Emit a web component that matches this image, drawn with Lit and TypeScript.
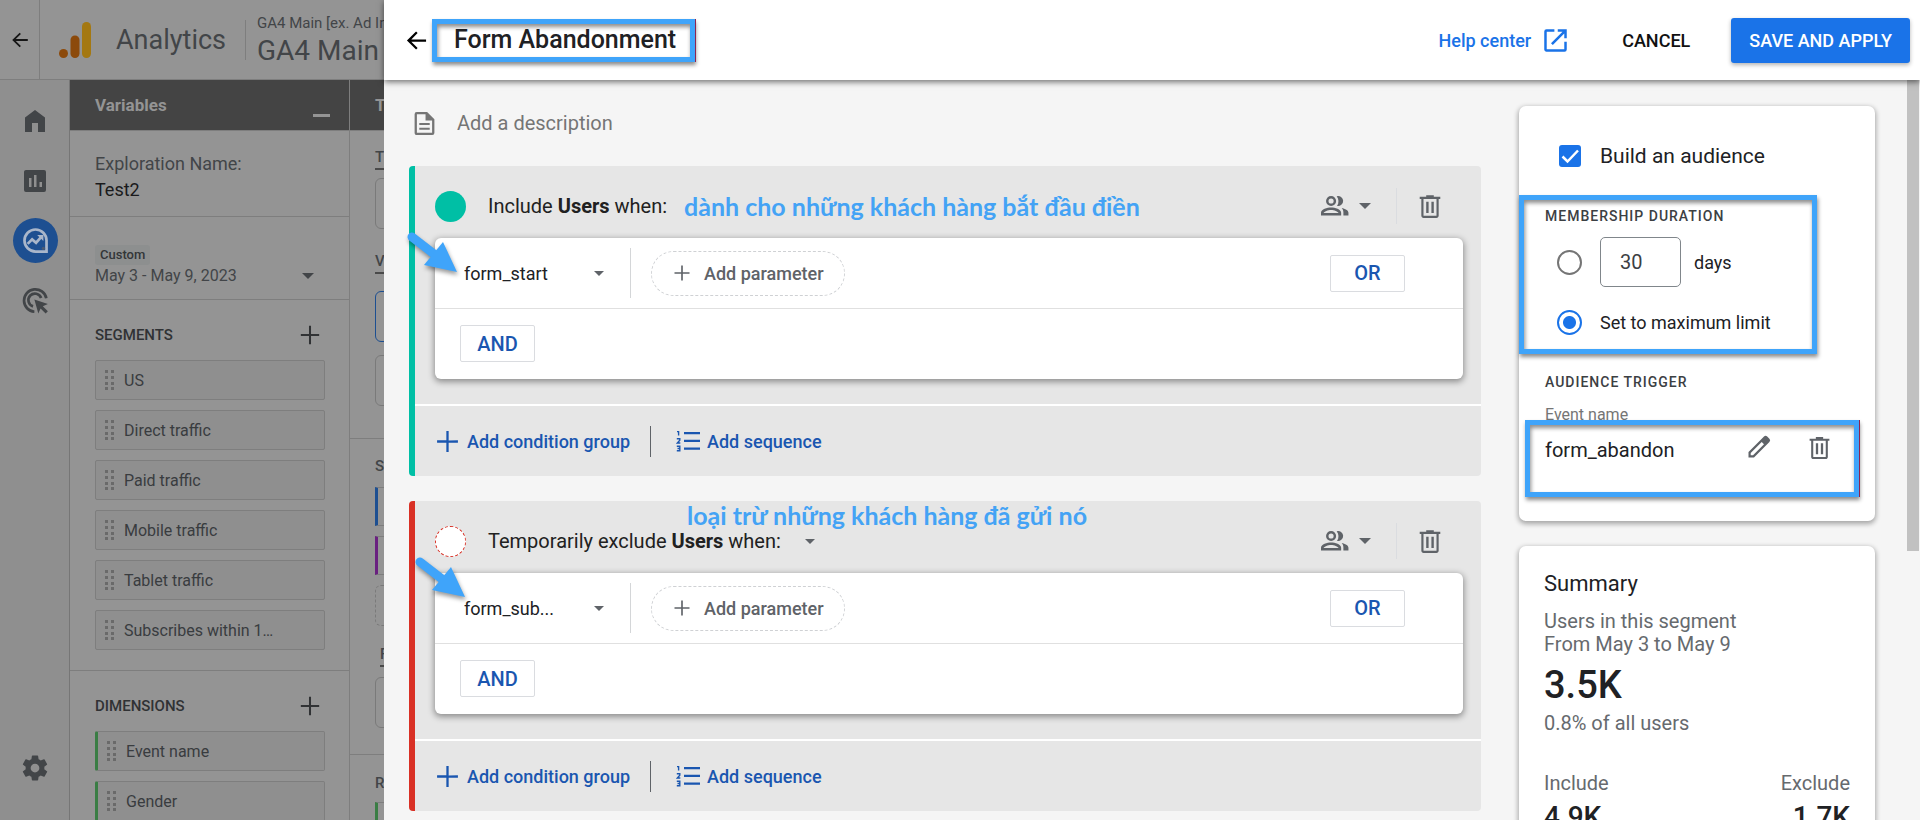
import { LitElement, html, css, svg, nothing } from "lit";
import { customElement, property } from "lit/decorators.js";
import { classMap } from "lit/directives/class-map.js";

const base = css`
  *,
  *::before,
  *::after {
    box-sizing: border-box;
  }
  h1, h2, h3, p, ul, dl, dd {
    margin: 0;
    padding: 0;
  }
  ul {
    list-style: none;
  }
  button, input, select {
    font: inherit;
    color: inherit;
    margin: 0;
    padding: 0;
    border: 0;
    background: none;
  }
  button, select {
    cursor: pointer;
  }
  a {
    color: inherit;
    text-decoration: none;
  }
  svg {
    display: block;
    flex: none;
  }
`;

const icon = (size: number, body: unknown, box = "0 0 24 24") =>
  html`<svg width=${size} height=${size} viewBox=${box} fill="currentColor" aria-hidden="true">${body}</svg>`;

const back = svg`<path d="M20.500 11H7.400l5.600-5.600L11.600 4l-8.100 8 8.100 8 1.400-1.400L7.400 13h13.100z"/>`;
const trash = svg`<path fill-rule="evenodd" d="M15.500 3.500V2h-7v1.500H2.500v2h1.500V21c0 1.100.900 2 2 2h12c1.100 0 2-.900 2-2V5.500h1.500v-2zM6 5.500h12V21H6z"/><path d="M8.500 8h2.200v10.500H8.500zM13.300 8h2.200v10.500h-2.200z"/>`;
const plus = svg`<path d="M13.100 11V2h-2.200v8.900H2v2.200h8.900V22h2.200v-8.900H22v-2.200z"/>`;
const home = svg`<path d="M2 23V8.500L12 1l10 7.500V23h-7v-9H9v9z"/>`;
const chart = svg`<path fill-rule="evenodd" d="M3 1h18a2 2 0 0 1 2 2v18a2 2 0 0 1-2 2H3a2 2 0 0 1-2-2V3c0-1.100.900-2 2-2zm3 8v9h2.500V9zm5-3v12h2.500V6zm5.500 7v5H19v-5z"/>`;
const explore = svg`<path fill="none" stroke="currentColor" stroke-width="2.400" d="M12 2.200a9.800 9.800 0 1 0 0 19.600h9.800V12A9.800 9.800 0 0 0 12 2.200z"/><path fill="none" stroke="currentColor" stroke-width="2.400" d="M5 15l4-4 3.500 3 4.500-5"/><path d="M13.500 7H19v5.500z"/><circle cx="19" cy="19" r="1.500" fill="#4a5a74"/>`;
const target = svg`<path fill="none" stroke="currentColor" stroke-width="2.400" d="M21.600 10A10 10 0 1 0 11 22M17 9.800A5.800 5.800 0 1 0 9.800 17.200"/><path d="M11 11l12 4-4.500 2 4.500 4.500-2 2-4.500-4.500-2 4.500z"/>`;
const gear = svg`<path d="M19.430 12.980c.040-.320.070-.640.070-.980s-.030-.660-.070-.980l2.110-1.650c.190-.150.240-.420.120-.640l-2-3.460a.5.5 0 0 0-.610-.220l-2.490 1a7.300 7.300 0 0 0-1.690-.980l-.380-2.650A.490.490 0 0 0 14 2h-4a.490.490 0 0 0-.490.420l-.380 2.650c-.610.250-1.170.590-1.690.980l-2.490-1a.5.5 0 0 0-.610.220l-2 3.460c-.130.220-.070.490.120.640l2.110 1.650c-.040.320-.070.650-.070.980s.030.660.070.980l-2.110 1.650a.5.5 0 0 0-.120.640l2 3.460c.120.220.390.300.610.220l2.490-1c.520.400 1.080.730 1.690.980l.380 2.650c.030.240.240.420.490.420h4c.250 0 .460-.180.490-.420l.380-2.650a7.300 7.300 0 0 0 1.690-.980l2.490 1c.230.090.490 0 .610-.220l2-3.460a.5.5 0 0 0-.120-.640zM12 15.500a3.500 3.500 0 1 1 0-7 3.500 3.500 0 0 1 0 7z"/>`;
const people = svg`<path fill-rule="evenodd" d="M9 3.500a4.500 4.500 0 1 1 0 9 4.500 4.500 0 0 1 0-9zm0 2.200a2.300 2.300 0 1 0 0 4.600 2.300 2.300 0 0 0 0-4.600zM0 18.500c0-3.200 5.500-4.700 9-4.700s9 1.500 9 4.700V21H0zm2.300.300h13.400c-.500-1.500-3.900-2.800-6.700-2.800s-6.200 1.300-6.700 2.800z"/><path d="M14 3.700a4.500 4.500 0 1 1 .3 8.700c1.900-2.600 1.700-6.200-.3-8.700zM18.500 14.300c2.900.600 6 2 6 4.300V21H20v-2.500c0-1.700-.500-3.100-1.500-4.200z"/>`;
const external = svg`<path d="M19.800 19.800H4.200V4.200H11V2H4a2 2 0 0 0-2 2v16c0 1.100.900 2 2 2h16a2 2 0 0 0 2-2v-7h-2.200zM14 2v2.200h4.200L8 14.400 9.600 16 19.800 5.800V10H22V2z"/>`;
const doc = svg`<path fill-rule="evenodd" d="M14.500 1H4.500a2 2 0 0 0-2 2v18c0 1.100.900 2 2 2h15a2 2 0 0 0 2-2V8zm4.800 19.800H4.700V3.200H13V9h6.300z"/><path d="M7 11.500h10v2H7zM7 16h10v2H7z"/>`;
const pencil = svg`<path fill-rule="evenodd" d="M17 1.600a2.300 2.300 0 0 1 3.200 0l2.200 2.200a2.300 2.300 0 0 1 0 3.200L7 22.500H1.500V17zM3.700 18v2.300H6L17 9.300 14.700 7z"/>`;
const numbered = svg`<path d="M8 3h16v2.300H8zM8 10.700h16V13H8zM8 18.400h16v2.300H8z"/><path fill="none" stroke="currentColor" stroke-width="1.400" d="M1 2.600h1.600v4M.800 9.700h3v1.500L1.300 14H4.300M.800 17.300h3v4.400h-3M1.500 19.500h2.300"/>`;

const caret = (w = 12) =>
  html`<svg width=${w} height=${w / 2} viewBox="0 0 12 6" fill="currentColor" aria-hidden="true"><path d="M0 0h12L6 6z" /></svg>`;

/** Page that stays dimmed behind the open segment builder. */
@customElement("exploration-page")
export class ExplorationPage extends LitElement {
  static styles = [
    base,
    css`
      :host {
        display: flex;
        flex-direction: column;
        height: 100%;
        background: #949494;
        color: #424548;
        font-size: 16px;
      }
      .top {
        display: flex;
        align-items: center;
        flex: none;
        height: 80px;
        border-bottom: 1px solid #7e7e7e;
        white-space: nowrap;
      }
      .back {
        display: grid;
        place-items: center;
        width: 40px;
        height: 100%;
        border-right: 1px solid #7e7e7e;
        color: #161616;
      }
      .logo {
        margin-left: 19px;
      }
      .brand {
        margin-left: 25px;
        font-size: 27px;
        width: 129px;
      }
      .account {
        border-left: 1px solid #7e7e7e;
        padding-left: 11px;
        height: 40px;
        display: flex;
        flex-direction: column;
        justify-content: center;
      }
      .account small {
        font-size: 15px;
        line-height: 22px;
      }
      .account strong {
        font-size: 28px;
        font-weight: 400;
        line-height: 34px;
      }
      .body {
        display: flex;
        flex: 1;
        min-height: 0;
      }
      .rail {
        display: flex;
        flex-direction: column;
        align-items: center;
        width: 70px;
        padding: 18px 0 30px 1px;
        border-right: 1px solid #767676;
        background: #8f8f8f;
      }
      .rail a {
        display: grid;
        place-items: center;
        width: 45px;
        height: 45px;
        margin-bottom: 15px;
        border-radius: 50%;
      }
      .rail a.active {
        background: #1d4f91;
        color: #a9b6ca;
      }
      .rail a.last {
        margin-top: auto;
        margin-bottom: 0;
      }
      .column {
        flex: none;
        width: 280px;
        border-right: 1px solid #7e7e7e;
      }
      .bar {
        display: flex;
        justify-content: space-between;
        height: 51px;
        padding: 0 19px 0 25px;
        border-bottom: 1px solid #7e7e7e;
        background: #444;
        color: #949494;
        font-size: 17px;
        font-weight: 700;
        line-height: 50px;
      }
      .bar h2 {
        font: inherit;
      }
      .minimize {
        width: 17px;
        height: 3px;
        margin-top: 34px;
        background: #949494;
      }
      .section {
        padding: 20px 24px 20px 25px;
        border-bottom: 1px solid #7e7e7e;
      }
      .name {
        padding-bottom: 13px;
        font-size: 18px;
        line-height: 26px;
      }
      .name p + p {
        color: #1a1a1c;
      }
      .dates {
        padding: 28px 24px 12px 25px;
      }
      .badge {
        display: block;
        width: max-content;
        padding: 0 5px;
        border-radius: 3px;
        background: #8d8f8f;
        color: #333638;
        font-size: 13px;
        font-weight: 500;
        line-height: 20px;
      }
      .range {
        display: flex;
        align-items: center;
        justify-content: space-between;
        width: 100%;
        padding-right: 11px;
        line-height: 22px;
      }
      .title {
        display: flex;
        align-items: center;
        justify-content: space-between;
        height: 30px;
        margin-bottom: 10px;
        padding-right: 4px;
        color: #303234;
      }
      .title h3 {
        font-size: 15px;
        font-weight: 500;
      }
      .chips {
        display: grid;
        gap: 10px;
      }
      .chip {
        display: flex;
        align-items: center;
        gap: 9px;
        height: 40px;
        padding-left: 9px;
        border: 1px solid #7e7e7e;
        border-radius: 2px;
        background: #8f8f8f;
        color: #393c3f;
      }
      .grip {
        color: #6a6a6a;
      }
      .dimension {
        border-left: 3px solid #3a7d44;
      }
      .settings {
        flex: 1;
        min-width: 0;
      }
      .label {
        width: max-content;
        border-bottom: 2px dashed #4a4a4a;
        font-size: 15px;
        font-weight: 500;
        line-height: 22px;
      }
      .slot {
        height: 51px;
        border: 1px solid #7a7a7a;
        border-radius: 6px;
      }
      .slot.picked {
        margin: 9px 0 5px;
        border-color: #1d4f91;
      }
      .slot.empty {
        border-style: dashed;
        height: 41px;
      }
      .group {
        display: grid;
        align-content: start;
        padding-left: 25px;
        border-bottom: 1px solid #7e7e7e;
      }
      .first {
        gap: 8px;
        padding-top: 15px;
        padding-bottom: 32px;
      }
      .first .label + .slot + .label {
        margin-top: 13px;
      }
      .second {
        gap: 10px;
        padding-top: 16px;
        padding-bottom: 26px;
      }
      .second .label,
      .third .label {
        border: 0;
      }
      .mark {
        height: 39px;
        border: 1px solid #7e7e7e;
        border-left: 3px solid #1d4f91;
      }
      .mark.violet {
        border-left-color: #6a2080;
      }
      .mark.green {
        border-left-color: #3a7d44;
      }
      .second .label.filter {
        margin: 7px 0 0 5px;
        border-bottom: 2px dashed #4a4a4a;
      }
      .third {
        gap: 8px;
        padding-top: 17px;
        border: 0;
      }
    `,
  ];

  segments = ["US", "Direct traffic", "Paid traffic", "Mobile traffic", "Tablet traffic", "Subscribes within 1…"];
  dimensions = ["Event name", "Gender"];

  chip(text: string, dimension = false) {
    return html`<li class=${classMap({ chip: true, dimension })}>
      <svg class="grip" width="10" height="22" viewBox="0 0 10 22" fill="currentColor" aria-hidden="true">
        ${[1, 7, 13, 18].map((y) => svg`<path d="M0 ${y}h3v3H0zM6 ${y}h3v3H6z"/>`)}
      </svg>
      ${text}
    </li>`;
  }

  list(title: string, items: string[], dimension = false) {
    return html`<section class="section">
      <div class="title">
        <h3>${title}</h3>
        <button aria-label="Add ${title.toLowerCase()}">${icon(22, plus)}</button>
      </div>
      <ul class="chips">${items.map((item) => this.chip(item, dimension))}</ul>
    </section>`;
  }

  render() {
    return html`
      <header class="top">
        <a class="back" href="#" aria-label="Back">${icon(22, back)}</a>
        <svg class="logo" width="32" height="36" viewBox="0 0 32 36" aria-hidden="true">
          <rect x="23" width="9" height="36" rx="4.500" fill="#a47811" />
          <rect x="11.500" y="13.500" width="9" height="22.500" rx="4.500" fill="#8c4a0b" />
          <circle cx="4.500" cy="31.500" r="4.500" fill="#8c4a0b" />
        </svg>
        <span class="brand">Analytics</span>
        <div class="account"><small>GA4 Main [ex. Ad Int]</small><strong>GA4 Main</strong></div>
      </header>
      <div class="body">
        <nav class="rail">
          <a href="#" aria-label="Home">${icon(24, home)}</a>
          <a href="#" aria-label="Reports">${icon(24, chart)}</a>
          <a href="#" class="active" aria-label="Explore">${icon(27, explore)}</a>
          <a href="#" aria-label="Advertising">${icon(27, target)}</a>
          <a href="#" class="last" aria-label="Admin">${icon(30, gear)}</a>
        </nav>
        <div class="column">
          <div class="bar"><h2>Variables</h2><button class="minimize" aria-label="Minimize"></button></div>
          <section class="section name"><p>Exploration Name:</p><p>Test2</p></section>
          <section class="section dates">
            <span class="badge">Custom</span>
            <button class="range">May 3 - May 9, 2023 ${caret()}</button>
          </section>
          ${this.list("SEGMENTS", this.segments)} ${this.list("DIMENSIONS", this.dimensions, true)}
        </div>
        <div class="settings">
          <div class="bar">Tab</div>
          <div class="group first">
            <span class="label">T</span>
            <div class="slot"></div>
            <span class="label">V</span>
            <div class="slot picked"></div>
            <div class="slot"></div>
          </div>
          <div class="group second">
            <span class="label">S</span>
            <div class="mark"></div>
            <div class="mark violet"></div>
            <div class="slot empty"></div>
            <span class="label filter">F</span>
            <div class="slot"></div>
          </div>
          <div class="group third">
            <span class="label">R</span>
            <div class="mark green"></div>
          </div>
        </div>
      </div>
    `;
  }
}

@customElement("condition-card")
export class ConditionCard extends LitElement {
  @property({ type: Boolean }) exclude = false;
  @property() event = "";
  @property() note = "";

  static styles = [
    base,
    css`
      :host {
        display: block;
        position: relative;
        border-left: 6px solid #00bfa5;
        border-radius: 4px;
        background: #e6e6e6;
      }
      :host([exclude]) {
        border-left-color: #d93025;
      }
      .head {
        display: flex;
        align-items: center;
        padding: 22px 18px 14px 20px;
        color: #212121;
        font-size: 20px;
        line-height: 36px;
      }
      .dot {
        width: 31px;
        height: 31px;
        margin-right: 22px;
        border-radius: 50%;
        background: #00bfa5;
      }
      .dot.hollow {
        border: 1px dashed #d93025;
        background: #fff;
      }
      .mode {
        margin-left: 24px;
        color: #5f6368;
      }
      .note {
        margin-left: 17px;
        color: #44a3f5;
        font: 700 25px/30px Lato, "Open Sans", sans-serif;
        white-space: nowrap;
      }
      .note.over {
        position: absolute;
        left: 255px;
        top: -1px;
      }
      .scope {
        display: flex;
        align-items: center;
        gap: 10px;
        margin-left: auto;
        color: #5f6368;
      }
      .remove {
        height: 36px;
        margin-left: 25px;
        padding: 0 20px;
        border-left: 1px solid #dadce0;
        color: #5f6368;
      }
      .box {
        position: relative;
        margin: 0 18px 25px 20px;
        border-radius: 6px;
        background: #fff;
        box-shadow: 0 2px 6px 1px rgba(0, 0, 0, 0.38);
      }
      .row {
        display: flex;
        align-items: center;
        height: 71px;
        padding: 0 58px 0 29px;
        border-bottom: 1px solid #e0e0e0;
      }
      .event {
        display: grid;
        align-items: center;
        width: 167px;
        height: 50px;
        margin-right: 20px;
        border-right: 1px solid #d4d6d8;
        color: #5f6368;
      }
      .event select,
      .event svg {
        grid-area: 1 / 1;
      }
      .event select {
        width: 142px;
        height: 40px;
        appearance: none;
        color: #202124;
        font-size: 18px;
      }
      .event svg {
        margin-left: 130px;
        pointer-events: none;
      }
      .parameter {
        display: flex;
        align-items: center;
        gap: 13px;
        height: 45px;
        padding: 0 20px 0 21px;
        border: 1px dashed #cfd1d4;
        border-radius: 23px;
        color: #5f6368;
        font-size: 18px;
        font-weight: 500;
      }
      .logic {
        width: 75px;
        height: 37px;
        border: 1px solid #dadce0;
        border-radius: 2px;
        color: #1a56b0;
        font-size: 20px;
        font-weight: 500;
      }
      .row .logic {
        margin-left: auto;
      }
      .next {
        padding: 16px 25px 17px;
      }
      .next .logic {
        display: block;
      }
      .arrow {
        position: absolute;
        left: -30px;
        top: -8px;
        filter: drop-shadow(1px 3px 2px rgba(0, 0, 0, 0.4));
      }
      .arrow.low {
        left: -22px;
        top: -18px;
      }
      .foot {
        display: flex;
        align-items: center;
        height: 72px;
        padding-left: 20px;
        border-top: 2px solid #fff;
        color: #1a56b0;
        font-size: 18px;
        font-weight: 500;
      }
      .foot button {
        display: flex;
        align-items: center;
        gap: 7px;
      }
      .foot button + button {
        margin-left: 20px;
        padding-left: 25px;
        height: 31px;
        border-left: 1px solid #5f6368;
      }
    `,
  ];

  render() {
    const { exclude } = this;
    return html`
      <div class="head">
        <span class=${classMap({ dot: true, hollow: exclude })}></span>
        <span>${exclude ? "Temporarily exclude" : "Include"} <b>Users</b> when:</span>
        ${exclude ? html`<button class="mode" aria-label="Exclusion mode">${caret(10)}</button>` : nothing}
        <span class=${classMap({ note: true, over: exclude })}>${this.note}</span>
        <button class="scope" aria-label="Condition scope">${icon(28, people, "0 0 25 25")} ${caret()}</button>
        <button class="remove" aria-label="Delete group">${icon(26, trash)}</button>
      </div>
      <div class="box">
        <div class="row">
          <div class="event">
            <select aria-label="Event"><option>${this.event}</option></select>
            ${caret(10)}
          </div>
          <button class="parameter">${icon(18, plus)} Add parameter</button>
          <button class="logic">OR</button>
        </div>
        <div class="next"><button class="logic">AND</button></div>
        <svg class=${classMap({ arrow: true, low: exclude })} width="56" height="48" viewBox="0 0 56 48" aria-hidden="true">
          <path d="M7 7l22 17" stroke="#3fa4fa" stroke-width="9" stroke-linecap="round" />
          <path d="M52 42L38 12 19 35z" fill="#3fa4fa" />
        </svg>
      </div>
      <div class="foot">
        <button>${icon(25, plus)} Add condition group</button>
        <button>${icon(24, numbered)} Add sequence</button>
      </div>
    `;
  }
}

@customElement("audience-panel")
export class AudiencePanel extends LitElement {
  static styles = [
    base,
    css`
      :host {
        display: grid;
        align-content: start;
        gap: 25px;
        color: #202124;
      }
      .card {
        border-radius: 7px;
        background: #fff;
        box-shadow: 0 2px 5px 1px rgba(0, 0, 0, 0.32);
      }
      .audience {
        padding: 36px 0 55px;
      }
      .build {
        display: flex;
        align-items: center;
        gap: 19px;
        height: 28px;
        margin-left: 40px;
        font-size: 21px;
      }
      .check {
        display: grid;
      }
      .check input,
      .check svg {
        grid-area: 1 / 1;
      }
      .check input {
        width: 22px;
        height: 22px;
        appearance: none;
        border: 2px solid #5f6368;
        border-radius: 3px;
      }
      .check input:checked {
        border: 0;
        background: #1a73e8;
      }
      .check svg {
        pointer-events: none;
      }
      .wrap {
        position: relative;
        padding: 0 26px;
      }
      .duration {
        margin-top: 36px;
      }
      .frame {
        position: absolute;
        border: 5px solid #3fa4fa;
        box-shadow: 1px 3px 4px rgba(0, 0, 0, 0.45), inset 1px 3px 4px rgba(0, 0, 0, 0.45);
        pointer-events: none;
      }
      .duration .frame {
        inset: -11px 58px -17px 0;
      }
      .trigger .frame {
        inset: -14px 16px -31px 6px;
        box-shadow: 1px 0 0 #8e2350, 1px 3px 4px rgba(0, 0, 0, 0.45), inset 1px 3px 4px rgba(0, 0, 0, 0.45);
      }
      h3 {
        color: #3c4043;
        font-size: 14px;
        font-weight: 500;
        letter-spacing: 1px;
        line-height: 20px;
      }
      .option {
        display: flex;
        align-items: center;
        gap: 18px;
        margin-left: 12px;
        font-size: 18px;
      }
      .days {
        height: 50px;
        margin-top: 11px;
      }
      .limit {
        height: 30px;
        margin-top: 20px;
      }
      .field {
        display: flex;
        align-items: center;
        gap: 13px;
      }
      .field input {
        width: 81px;
        height: 50px;
        padding-left: 19px;
        border: 1px solid #80868b;
        border-radius: 5px;
        color: #3c4043;
        font-size: 20px;
      }
      input[type="radio"] {
        width: 25px;
        height: 25px;
        appearance: none;
        border: 2px solid #757575;
        border-radius: 50%;
      }
      input[type="radio"]:checked {
        border-color: #1a73e8;
        background: radial-gradient(circle, #1a73e8 0 6px, transparent 7px);
      }
      .heading {
        margin: 35px 26px 13px;
      }
      .caption {
        margin: 0 26px 9px;
        color: #757575;
        font-size: 16px;
        line-height: 20px;
      }
      .trigger {
        display: flex;
        gap: 36px;
        height: 32px;
        padding-right: 43px;
        color: #5f6368;
      }
      .trigger span {
        margin-right: auto;
        color: #202124;
        font-size: 20px;
        line-height: 32px;
      }
      .trigger button {
        height: 26px;
      }
      .summary {
        padding: 24px 25px;
        color: #666a6e;
        font-size: 20px;
        line-height: 24px;
      }
      .summary h2 {
        margin-bottom: 12px;
        color: #202124;
        font-size: 22px;
        font-weight: 400;
        line-height: 28px;
      }
      .lines {
        line-height: 23px;
      }
      .total {
        margin: 6px 0 3px;
        color: #202124;
        font-size: 38px;
        font-weight: 500;
        line-height: 46px;
      }
      .split {
        display: flex;
        justify-content: space-between;
        margin-top: 36px;
      }
      .split div:last-child {
        text-align: right;
      }
      .split dd {
        margin-top: 4px;
        color: #202124;
        font-size: 28px;
        font-weight: 500;
        line-height: 36px;
      }
    `,
  ];

  render() {
    return html`
      <section class="card audience">
        <label class="build">
          <span class="check">
            <input type="checkbox" checked />
            <svg width="22" height="22" viewBox="0 0 22 22" aria-hidden="true">
              <path d="M3.500 11.500l5 5L19 5.500" fill="none" stroke="#fff" stroke-width="2.500" />
            </svg>
          </span>
          Build an audience
        </label>
        <div class="wrap duration">
          <h3>MEMBERSHIP DURATION</h3>
          <div class="option days">
            <input type="radio" name="duration" aria-label="Number of days" />
            <label class="field"><input type="text" value="30" />days</label>
          </div>
          <label class="option limit"><input type="radio" name="duration" checked />Set to maximum limit</label>
          <div class="frame"></div>
        </div>
        <h3 class="heading">AUDIENCE TRIGGER</h3>
        <p class="caption">Event name</p>
        <div class="wrap trigger">
          <span>form_abandon</span>
          <button aria-label="Edit trigger">${icon(24, pencil)}</button>
          <button aria-label="Delete trigger">${icon(25, trash)}</button>
          <div class="frame"></div>
        </div>
      </section>
      <section class="card summary">
        <h2>Summary</h2>
        <p class="lines">Users in this segment<br />From May 3 to May 9</p>
        <p class="total">3.5K</p>
        <p>0.8% of all users</p>
        <dl class="split">
          <div><dt>Include</dt><dd>4.9K</dd></div>
          <div><dt>Exclude</dt><dd>1.7K</dd></div>
        </dl>
      </section>
    `;
  }
}

@customElement("app-root")
export class AppRoot extends LitElement {
  static styles = [
    base,
    css`
      :host {
        display: block;
        position: relative;
        height: 100vh;
        overflow: hidden;
        font-family: Roboto, "Liberation Sans", sans-serif;
      }
      .drawer {
        position: absolute;
        inset: 0 0 0 20%;
        display: flex;
        flex-direction: column;
        background: #f5f5f5;
      }
      .bar {
        position: relative;
        z-index: 1;
        display: flex;
        align-items: center;
        flex: none;
        height: 80px;
        padding: 0 10px 0 19px;
        background: #fff;
        box-shadow: 0 2px 6px rgba(0, 0, 0, 0.55);
        font-size: 18px;
        font-weight: 500;
      }
      .title {
        position: relative;
        margin-left: 24px;
        color: #202124;
        font-size: 25px;
        font-weight: 500;
        line-height: 32px;
      }
      .frame {
        position: absolute;
        inset: -5px -19px -6px -22px;
        border: 5px solid #3fa4fa;
        box-shadow: 1px 0 0 #8e2350, 1px 3px 4px rgba(0, 0, 0, 0.45), inset 1px 3px 4px rgba(0, 0, 0, 0.45);
        pointer-events: none;
      }
      .help {
        display: flex;
        align-items: center;
        gap: 11px;
        margin-left: auto;
        color: #1a73e8;
      }
      .cancel {
        margin: 0 41px 0 53px;
        color: #111;
      }
      .save {
        height: 45px;
        padding: 0 18px;
        border-radius: 3px;
        background: #1a73e8;
        box-shadow: 0 2px 4px rgba(0, 0, 0, 0.3);
        color: #fff;
      }
      .content {
        display: flex;
        gap: 38px;
        flex: 1;
        min-height: 0;
        padding: 26px 45px 0 25px;
        overflow: hidden;
      }
      .builder {
        display: flex;
        flex-direction: column;
        flex: 1;
        min-width: 0;
      }
      .builder condition-card {
        flex: none;
        margin-bottom: 25px;
      }
      .description {
        display: flex;
        align-items: center;
        flex: none;
        gap: 20px;
        height: 34px;
        margin-bottom: 26px;
        padding-left: 3px;
        color: #757575;
        font-size: 20px;
      }
      .description input {
        flex: 1;
        outline: 0;
      }
      .description input::placeholder {
        color: #757575;
      }
      audience-panel {
        flex: none;
        width: 356px;
      }
      .scrollbar {
        position: absolute;
        top: 80px;
        right: 1px;
        width: 12px;
        height: calc(64% - 54px);
        background: #c1c1c1;
      }
    `,
  ];

  render() {
    return html`
      <exploration-page></exploration-page>
      <main class="drawer">
        <header class="bar">
          <button aria-label="Close">${icon(27, back)}</button>
          <h1 class="title">Form Abandonment<span class="frame"></span></h1>
          <a class="help" href="#">Help center ${icon(27, external)}</a>
          <button class="cancel">CANCEL</button>
          <button class="save">SAVE AND APPLY</button>
        </header>
        <div class="content">
          <div class="builder">
            <label class="description">${icon(25, doc)}<input type="text" placeholder="Add a description" /></label>
            <condition-card event="form_start" note="dành cho những khách hàng bắt đầu điền"></condition-card>
            <condition-card exclude event="form_sub..." note="loại trừ những khách hàng đã gửi nó"></condition-card>
          </div>
          <audience-panel></audience-panel>
        </div>
        <div class="scrollbar"></div>
      </main>
    `;
  }
}
